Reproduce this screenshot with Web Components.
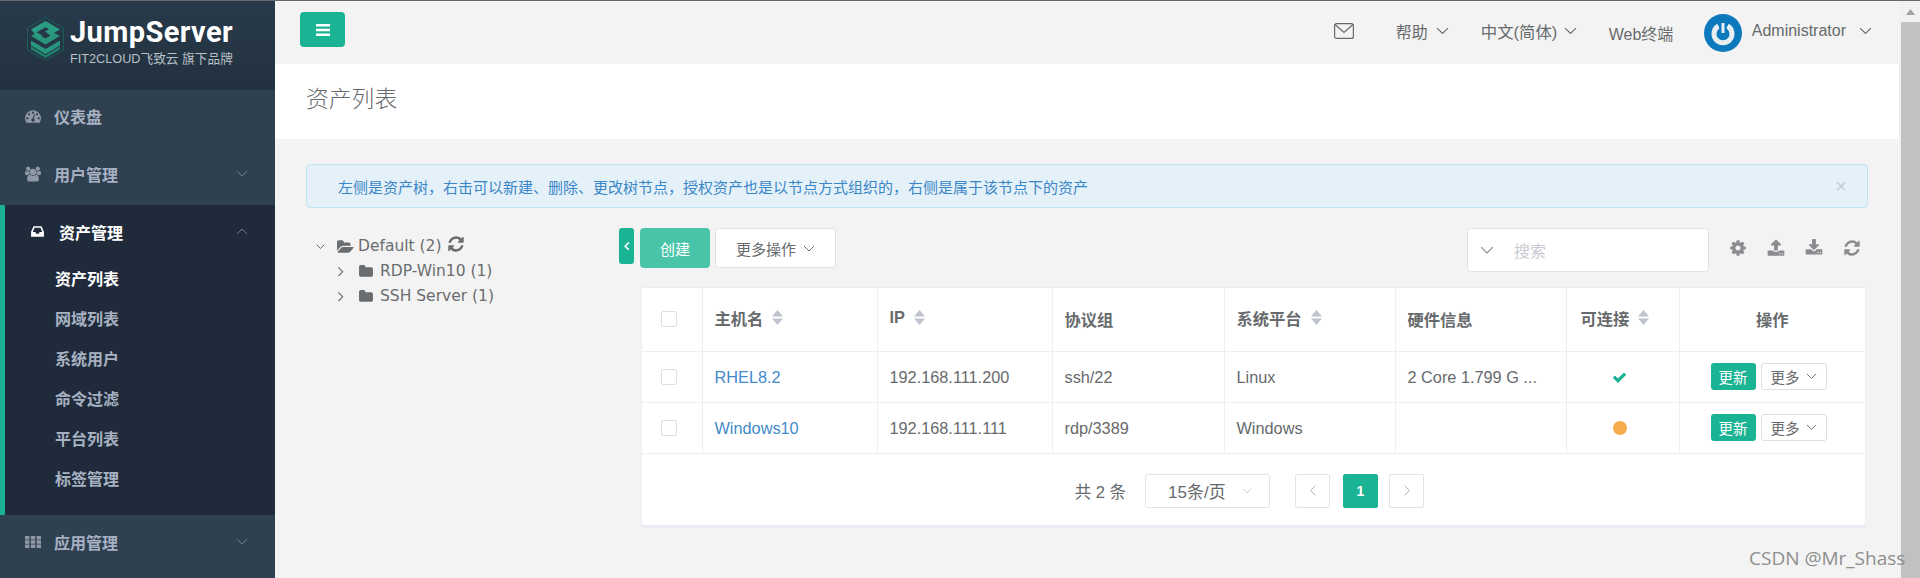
<!DOCTYPE html>
<html lang="zh"><head><meta charset="utf-8"><title>资产列表</title>
<style>
html,body{margin:0;height:578px;overflow:hidden;background:#f3f3f3}
body{font-family:"Liberation Sans","Noto Sans CJK SC",sans-serif;color:#676a6c;font-size:16px}
</style></head><body>
<js-app></js-app>
<script>
const P={
dashboard:['0 0 1792 1792','M384 1152q0-53-37.5-90.5t-90.5-37.5-90.5 37.5-37.5 90.5 37.5 90.5 90.5 37.5 90.5-37.5 37.5-90.5zm192-448q0-53-37.5-90.5t-90.5-37.5-90.5 37.5-37.5 90.5 37.5 90.5 90.5 37.5 90.5-37.5 37.5-90.5zm428 481l101-382q6-26-7.5-48.5t-38.5-29.5-48 6.5-30 39.5l-101 382q-60 5-107 43.5t-63 98.5q-20 77 20 146t117 89 146-20 89-117q16-60-6-117t-72-91zm660-33q0-53-37.5-90.5t-90.5-37.5-90.5 37.5-37.5 90.5 37.5 90.5 90.5 37.5 90.5-37.5 37.5-90.5zm-640-640q0-53-37.5-90.5t-90.5-37.5-90.5 37.5-37.5 90.5 37.5 90.5 90.5 37.5 90.5-37.5 37.5-90.5zm448 192q0-53-37.5-90.5t-90.5-37.5-90.5 37.5-37.5 90.5 37.5 90.5 90.5 37.5 90.5-37.5 37.5-90.5zm320 448q0 261-141 483-19 29-54 29h-1402q-35 0-54-29-141-221-141-483 0-182 71-348t191-286 286-191 348-71 348 71 286 191 191 286 71 348z'],
users:['0 0 1920 1792','M593 896q-162 5-265 128h-134q-82 0-138-40.5t-56-118.5q0-353 124-353 6 0 43.5 21t97.5 42.5 119 21.5q67 0 133-23-5 37-5 66 0 139 81 256zm1071 637q0 120-73 189.5t-194 69.5h-874q-121 0-194-69.5t-73-189.5q0-53 3.5-103.5t14-109 26.5-108.5 43-97.5 62-81 85.5-53.5 111.5-20q10 0 43 21.5t73 48 107 48 135 21.5 135-21.5 107-48 73-48 43-21.5q61 0 111.5 20t85.5 53.5 62 81 43 97.5 26.5 108.5 14 109 3.5 103.5zm-1024-1277q0 106-75 181t-181 75-181-75-75-181 75-181 181-75 181 75 75 181zm704 384q0 159-112.5 271.5t-271.5 112.5-271.5-112.5-112.5-271.5 112.5-271.5 271.5-112.5 271.5 112.5 112.5 271.5zm576 225q0 78-56 118.5t-138 40.5h-134q-103-123-265-128 81-117 81-256 0-29-5-66 66 23 133 23 59 0 119-21.5t97.5-42.5 43.5-21q124 0 124 353zm-128-609q0 106-75 181t-181 75-181-75-75-181 75-181 181-75 181 75 75 181z'],
inbox:['0 0 1792 1792','M1151 960h316q-1-3-2.5-8.5t-2.5-7.5l-212-496h-708l-212 496q-1 3-2.5 8.5t-2.5 7.5h316l95 192h320zm513 30v482q0 26-19 45t-45 19h-1408q-26 0-45-19t-19-45v-482q0-62 25-123l238-552q10-25 36.5-42t52.5-17h832q26 0 52.5 17t36.5 42l238 552q25 61 25 123z'],
th:['0 0 16 12','M0 0h4.4v3.4H0zM5.8 0h4.4v3.4H5.800zM11.600 0H16v3.400h-4.400zM0 4.300h4.400v3.400H0zM5.800 4.300h4.400v3.400H5.800zM11.600 4.300H16v3.400h-4.400zM0 8.600h4.400V12H0zM5.800 8.600h4.400V12H5.800zM11.600 8.600H16V12h-4.400z'],
refresh:['0 0 1792 1792','M1639 1056q0 5-1 7-64 268-268 434.5t-478 166.5q-146 0-282.5-55t-243.5-157l-129 129q-19 19-45 19t-45-19-19-45v-448q0-26 19-45t45-19h448q26 0 45 19t19 45-19 45l-137 137q71 66 161 102t187 36q134 0 250-65t186-179q11-17 53-117 8-23 30-23h192q13 0 22.5 9.5t9.5 22.5zm25-800v448q0 26-19 45t-45 19h-448q-26 0-45-19t-19-45 19-45l138-138q-148-137-349-137-134 0-250 65t-186 179q-11 17-53 117-8 23-30 23h-199q-13 0-22.5-9.5t-9.5-22.5v-7q65-268 270-434.5t480-166.5q146 0 284 55.5t245 156.5l130-129q19-19 45-19t45 19 19 45z'],
cog:['0 0 1792 1792','M1152 896q0-106-75-181t-181-75-181 75-75 181 75 181 181 75 181-75 75-181zm512-109v222q0 12-8 23t-20 13l-185 28q-19 54-39 91 35 50 107 138 10 12 10 25t-9 23q-27 37-99 108t-94 71q-12 0-26-9l-138-108q-44 23-91 38-16 136-29 186-7 28-36 28h-222q-14 0-24.5-8.5t-11.5-21.5l-28-184q-49-16-90-37l-141 107q-10 9-25 9-14 0-25-11-126-114-165-168-7-10-7-23 0-12 8-23 15-21 51-66.5t54-70.5q-27-50-41-99l-183-27q-13-2-21-12.5t-8-23.5v-222q0-12 8-23t19-13l186-28q14-46 39-92-40-57-107-138-10-12-10-24 0-10 9-23 26-36 98.5-107.5t94.5-71.5q13 0 26 10l138 107q44-23 91-38 16-136 29-186 7-28 36-28h222q14 0 24.5 8.5t11.5 21.5l28 184q49 16 90 37l142-107q9-9 24-9 13 0 25 10 129 119 165 170 7 8 7 22 0 12-8 23-15 21-51 66.5t-54 70.5q26 50 41 98l183 28q13 2 21 12.5t8 23.5z'],
upload:['0 0 1792 1792','M1344 1472q0-26-19-45t-45-19-45 19-19 45 19 45 45 19 45-19 19-45zm256 0q0-26-19-45t-45-19-45 19-19 45 19 45 45 19 45-19 19-45zm128-224v320q0 40-28 68t-68 28h-1472q-40 0-68-28t-28-68v-320q0-40 28-68t68-28h427q21 56 70.5 92t110.5 36h256q61 0 110.5-36t70.5-92h427q40 0 68 28t28 68zm-325-648q-17 40-59 40h-256v448q0 26-19 45t-45 19h-256q-26 0-45-19t-19-45v-448h-256q-42 0-59-40-17-39 14-69l448-448q18-19 45-19t45 19l448 448q31 30 14 69z'],
download:['0 0 1792 1792','M1344 1344q0-26-19-45t-45-19-45 19-19 45 19 45 45 19 45-19 19-45zm256 0q0-26-19-45t-45-19-45 19-19 45 19 45 45 19 45-19 19-45zm128-224v320q0 40-28 68t-68 28h-1472q-40 0-68-28t-28-68v-320q0-40 28-68t68-28h465l135 136q58 56 136 56t136-56l136-136h464q40 0 68 28t28 68zm-325-569q17 41-14 70l-448 448q-18 19-45 19t-45-19l-448-448q-31-29-14-70 17-39 59-39h256v-448q0-26 19-45t45-19h256q26 0 45 19t19 45v448h256q42 0 59 39z'],
check:['0 0 1792 1792','M1671 566q0 40-28 68l-724 724-136 136q-28 28-68 28t-68-28l-136-136-362-362q-28-28-28-68t28-68l136-136q28-28 68-28t68 28l294 295 656-657q28-28 68-28t68 28l136 136q28 28 28 68z'],
folder:['0 0 1664 1792','M1664 608v704q0 92-66 158t-158 66h-1216q-92 0-158-66t-66-158v-960q0-92 66-158t158-66h320q92 0 158 66t66 158v32h672q92 0 158 66t66 158z'],
folderopen:['0 0 1920 1792','M1879 952q0 31-31 66l-336 396q-43 51-120.5 86.5t-143.5 35.5h-1088q-34 0-60.5-13t-26.5-43q0-31 31-66l336-396q43-51 120.5-86.5t143.5-35.5h1088q34 0 60.5 13t26.5 43zm-343-344v160h-832q-94 0-197 47.5t-164 119.5l-337 396-5 6q0-4-.5-12.5t-.5-12.5v-960q0-92 66-158t158-66h320q92 0 158 66t66 158v32h544q92 0 158 66t66 158z'],
bars:['0 0 14 12','M0 0h14v2.600H0zM0 4.700h14v2.600H0zM0 9.400h14V12H0z']
};
function def(name,html,init){customElements.define(name,class extends HTMLElement{connectedCallback(){if(this.shadowRoot)return;const r=this.attachShadow({mode:'open'});r.innerHTML=typeof html==='function'?html(this):html;}});}
def('js-icon',h=>{const p=P[h.getAttribute('name')];return `<style>:host{display:inline-flex;width:${h.getAttribute('w')||14}px;height:${h.getAttribute('h')||14}px;color:inherit}svg{width:100%;height:100%;display:block;fill:currentColor}</style><svg viewBox="${p[0]}" preserveAspectRatio="xMidYMid meet"><path d="${p[1]}"/></svg>`});
def('js-chev',h=>{const d=h.getAttribute('dir')||'down',w=+(h.getAttribute('w')||12),c=h.getAttribute('color')||'currentColor',sw=h.getAttribute('sw')||'1';
const path={down:'M1 1l5 5 5-5',up:'M1 6l5-5 5 5',right:'M1.500 0.500l5 5-5 5',left:'M6.500 0.500l-5 5 5 5'}[d];const vb=(d==='left'||d==='right')?'0 0 8 11':'0 0 12 7';
const hh=(d==='left'||d==='right')?w*11/8:w*7/12;
return `<style>:host{display:inline-flex}svg{display:block;fill:none;stroke:${c};stroke-width:${sw}}</style><svg width="${w}" height="${hh}" viewBox="${vb}"><path d="${path}"/></svg>`});
def('js-sort',`<style>:host{display:inline-block;width:11px;height:15px}svg{display:block;fill:#bfc4cf}</style><svg width="11" height="15" viewBox="0 0 11 15"><path d="M5.500 0L11 6.400H0zM0 8.600h11L5.500 15z"/></svg>`);
def('js-nav-item',h=>{const ch=h.getAttribute('chev');return `<style>
:host{display:flex;align-items:center;height:${h.getAttribute('ht')||58}px;box-sizing:border-box;padding:0 27px 5px 25px;color:#a7b1c2;font-weight:700;font-size:16px}
:host([active]){color:#fff;padding-left:25px}
.i{width:16px;display:flex;margin-right:13px}
:host([active]) .i{width:15px;margin-right:14px}
.t{flex:1}
</style><span class="i"><slot name="icon"></slot></span><span class="t"><slot></slot></span>${ch?`<js-chev dir="${ch}" w="12" color="#6f7d8c"></js-chev>`:''}`});
def('js-sub-item',`<style>:host{display:block;height:40px;line-height:33px;padding-left:50px;color:#a7b1c2;font-weight:700;font-size:16px}:host([on]){color:#fff}</style><slot></slot>`);
def('js-logo',`<style>
:host{display:flex;height:89px;box-sizing:border-box;padding:16px 0 0 27px;background:linear-gradient(180deg,#283a4a,#22313f);gap:7px;color:#fff}
.n{font:700 29px/30px Roboto,"Liberation Sans",sans-serif;letter-spacing:.4px;margin-left:-1px}
.s{font:400 12.700px/16px "Liberation Sans","Noto Sans CJK SC",sans-serif;color:#b9c0c7;margin:4px 0 0 -1px;white-space:nowrap}
</style>
<svg width="37" height="44" viewBox="0 0 37 44"><path d="M18.500 .500L36.500 11v22l-18 10.500L.500 33V11z" fill="none" stroke="#1a5e5a" stroke-width="1"/><path d="M18.500 4L33 12.500 24 17.500 18 14.500l4-2.200-3.500-2-9 5 6 3.400-4 2.300L4 12.500z" fill="#2a9d82"/><path d="M4 19l5-3 9.500 5.500 5-3-4-2.400 3.800-2L33 19 18.500 27.500z" fill="#2a9d82" opacity=".9"/><path d="M4 23.500l14.500 8.500L33 23.500v5L18.500 37 4 28.500z" fill="#27977d"/><path d="M4 29.500l14.500 8.500L33 29.500v3L18.500 41 4 32.500z" fill="#20806c"/></svg>
<div><div class="n">JumpServer</div><div class="s">FIT2CLOUD飞致云 旗下品牌</div></div>`);
def('js-sidebar',`<style>
:host{display:block;width:275px;flex:none;background:#2f4050;height:577px;overflow:hidden}
.act{background:#1f2b3a;border-left:5px solid #1ab394;height:310px;box-sizing:border-box}
</style>
<js-logo></js-logo>
<js-nav-item ht="57"><js-icon slot="icon" name="dashboard" w="16" h="16" style="color:#8f99a5"></js-icon>仪表盘</js-nav-item>
<js-nav-item chev="down"><js-icon slot="icon" name="users" w="17" h="16" style="color:#8f99a5"></js-icon>用户管理</js-nav-item>
<div class="act">
<js-nav-item active chev="up"><js-icon slot="icon" name="inbox" w="15" h="15" style="color:#fff"></js-icon>资产管理</js-nav-item>
<js-sub-item on>资产列表</js-sub-item>
<js-sub-item>网域列表</js-sub-item>
<js-sub-item>系统用户</js-sub-item>
<js-sub-item>命令过滤</js-sub-item>
<js-sub-item>平台列表</js-sub-item>
<js-sub-item>标签管理</js-sub-item>
</div>
<js-nav-item chev="down"><js-icon slot="icon" name="th" w="16" h="12" style="color:#8f99a5"></js-icon>应用管理</js-nav-item>`);
def('js-topbar',`<style>
:host{display:flex;align-items:center;height:63px;background:#f3f3f3;padding-left:25px;font-size:16px;color:#676a6c}
.b{width:45px;height:35px;background:#1ab394;border-radius:4px;display:flex;align-items:center;justify-content:center;color:#fff;margin-top:-6px}
.r{margin-left:auto;display:flex;align-items:center;padding-right:27px;height:100%}
.it{display:flex;align-items:center;gap:8px;margin-top:-3px;white-space:nowrap}
.av{width:38px;height:38px;border-radius:50%;background:#0c79bd;display:flex;align-items:center;justify-content:center}
</style>
<div class="b"><js-icon name="bars" w="14" h="12"></js-icon></div>
<div class="r">
<svg width="20" height="16" viewBox="0 0 20 16" style="margin-right:42px;margin-top:-3px"><rect x=".6" y=".6" width="18.800" height="14.800" rx="2" fill="none" stroke="#676a6c" stroke-width="1.200"/><path d="M1 1.500l9 8 9-8" fill="none" stroke="#676a6c" stroke-width="1.200"/></svg>
<div class="it" style="width:85px">帮助<js-chev w="13" color="#676a6c"></js-chev></div>
<div class="it" style="width:128px;gap:7px;font-size:16.400px">中文(简体)<js-chev w="13" color="#676a6c"></js-chev></div>
<div class="it" style="width:95px;margin-top:1px;font-size:16px">Web终端</div>
<div class="av"><svg width="26" height="26" viewBox="0 0 26 26"><path d="M8.500 6A9 9 0 1 0 17.500 6" fill="none" stroke="#e8eef2" stroke-width="5"/><path d="M13 2v12" stroke="#0c79bd" stroke-width="7"/><path d="M13 3v10" stroke="#e8eef2" stroke-width="3"/></svg></div>
<div class="it" style="margin-left:10px;gap:0;font-size:16px;margin-top:-3px">Administrator<js-chev w="13" color="#676a6c" style="margin-left:13px"></js-chev></div>
</div>`);
def('js-title',`<style>:host{display:flex;align-items:center;height:75px;background:#fff;padding-left:31px;font-size:22.800px;color:#676a6c;font-weight:300;box-sizing:border-box;padding-bottom:8px}</style><slot></slot>`);
def('js-alert',`<style>:host{display:flex;align-items:center;height:44px;box-sizing:border-box;background:#e5f1f8;border:1px solid #bde5f1;border-radius:4px;padding:0 20px 0 31px;margin-right:1px;color:#3a87c8;font-size:15px}span{flex:1}i{font:400 20px/1 "Liberation Sans",sans-serif;color:#c3ced6}</style><span><slot></slot></span><i>×</i>`);
def('js-tree',`<style>
:host{display:block;width:313px;flex:none;padding-top:6px;font:400 15.500px/25px "DejaVu Sans","Noto Sans CJK SC",sans-serif;color:#6a6d70}
.r{display:flex;align-items:center;height:25px;white-space:nowrap}
.c{display:inline-flex;width:10px;justify-content:center;margin-right:10px}
.l{padding-left:9px}.l2{padding-left:29px}
</style>
<div class="r l"><span class="c"><js-chev w="9" sw="1.300" color="#676a6c"></js-chev></span><js-icon name="folderopen" w="17" h="16" style="margin:0 4px 0 2px"></js-icon>Default (2)<js-icon name="refresh" w="18" h="18" style="margin:-6px 0 0 5px"></js-icon></div>
<div class="r l2"><span class="c"><js-chev dir="right" w="7" sw="1.300" color="#676a6c"></js-chev></span><js-icon name="folder" w="14" h="15" style="margin:0 7px 0 4px"></js-icon>RDP-Win10 (1)</div>
<div class="r l2"><span class="c"><js-chev dir="right" w="7" sw="1.300" color="#676a6c"></js-chev></span><js-icon name="folder" w="14" h="15" style="margin:0 7px 0 4px"></js-icon>SSH Server (1)</div>`);
def('js-toolbar',`<style>
:host{display:flex;align-items:flex-start;height:44px;font-size:15px;color:#676a6c}
.t{width:15px;height:36px;background:#1ab394;border-radius:3px;display:flex;align-items:center;justify-content:center;margin-right:6px}
.c{width:70px;height:40px;background:#49c4a9;border-radius:4px;color:#fff;display:flex;align-items:center;justify-content:center;margin-right:5px}
.m{width:121px;height:40px;box-sizing:border-box;background:#fff;border:1px solid #dfe1e6;border-radius:4px;display:flex;align-items:center;justify-content:center;gap:7px}
.s{margin-left:auto;width:242px;height:44px;box-sizing:border-box;background:#fff;border:1px solid #dfe1e6;border-radius:4px;display:flex;align-items:center;padding-left:12px;font-size:16px;color:#c8cbd1}
.s span{margin-left:20px}
.ic{display:flex;gap:20px;margin:11px 8px 0 20px;color:#8a8c8f}
</style>
<div class="t"><js-chev dir="left" w="6" sw="2" color="#fff"></js-chev></div>
<div class="c">创建</div>
<div class="m">更多操作<js-chev w="12" color="#676a6c"></js-chev></div>
<div class="s"><js-chev w="14" color="#8a8c8f"></js-chev><span>搜索</span></div>
<div class="ic"><js-icon name="cog" w="18" h="18"></js-icon><js-icon name="upload" w="18" h="18"></js-icon><js-icon name="download" w="18" h="18"></js-icon><js-icon name="refresh" w="18" h="18"></js-icon></div>`);
def('js-check',`<style>:host{display:block;width:16px;height:16px;box-sizing:border-box;background:#fff;border:1px solid #dcdfe6;border-radius:2px}</style>`);
def('js-row-actions',`<style>
:host{display:flex;gap:5px;font-size:14.500px;margin-left:19px}
.u{width:45px;height:27px;background:#1ab394;border-radius:3px;color:#fff;display:flex;align-items:center;justify-content:center}
.m{width:66px;height:27px;box-sizing:border-box;background:#fff;border:1px solid #dcdfe6;border-radius:3px;display:flex;align-items:center;justify-content:center;gap:6px}
</style><div class="u">更新</div><div class="m">更多<js-chev w="11" color="#676a6c"></js-chev></div>`);
def('js-table',`<style>
:host{display:block;background:#fff;border:solid #e9ecf1;border-width:0 0 2px 0;box-shadow:0 0 0 1px #eaedf2;height:237px;font-size:16.300px;color:#676a6c}
table{border-collapse:collapse;table-layout:fixed;width:1223px}
th,td{border:1px solid #eceef2;padding:0 12px;text-align:left;white-space:nowrap;overflow:hidden;box-sizing:border-box}
tr>:first-child{border-left:0}tr>:last-child{border-right:0}
tr:first-child th{border-top:0}
th{height:63px;font-weight:700;font-size:16.300px}
td{height:51px;padding-top:2px}
td.ck,td:last-child{padding-top:0}
th.sort{padding-bottom:3px}
th span{display:inline-flex;align-items:center;gap:9px}
a{color:#428bca;text-decoration:none}
.ck{padding:0 0 0 19px}
td.ctr{text-align:center;padding:0 18px 0 12px}
th.ctr{text-align:center}
th.conn{padding-left:14px}
.dot{display:block;width:14px;height:14px;border-radius:50%;background:#f7ac4f;margin:auto}
.pg{display:flex;align-items:center;justify-content:flex-end;height:70px;padding:2px 441px 0 0;font-size:16.500px}
.sel{width:125px;height:34px;box-sizing:border-box;border:1px solid #e2e4e9;border-radius:3px;display:flex;align-items:center;margin-left:19px;padding-left:22px;gap:16px;font-size:17px}
.p{width:35px;height:34px;box-sizing:border-box;border:1px solid #e2e4e9;border-radius:2px;display:flex;align-items:center;justify-content:center}
.cur{background:#1ab394;color:#fff;border-color:#1ab394;font-weight:700;font-size:14px;margin:0 11px 0 13px}
</style>
<table><colgroup><col style="width:60px"><col style="width:175px"><col style="width:175px"><col style="width:172px"><col style="width:171px"><col style="width:171px"><col style="width:113px"><col style="width:186px"></colgroup>
<tr><th class="ck"><js-check></js-check></th><th class="sort"><span>主机名<js-sort></js-sort></span></th><th class="sort"><span>IP<js-sort></js-sort></span></th><th>协议组</th><th class="sort"><span>系统平台<js-sort></js-sort></span></th><th>硬件信息</th><th class="sort conn"><span>可连接<js-sort></js-sort></span></th><th class="ctr">操作</th></tr>
<tr><td class="ck"><js-check></js-check></td><td><a>RHEL8.2</a></td><td>192.168.111.200</td><td>ssh/22</td><td>Linux</td><td>2 Core 1.799 G ...</td><td class="ctr"><js-icon name="check" w="15" h="15" style="color:#1ab394;vertical-align:middle"></js-icon></td><td><js-row-actions></js-row-actions></td></tr>
<tr><td class="ck"><js-check></js-check></td><td><a>Windows10</a></td><td>192.168.111.111</td><td>rdp/3389</td><td>Windows</td><td></td><td class="ctr"><i class="dot"></i></td><td><js-row-actions></js-row-actions></td></tr>
</table>
<div class="pg">共 2 条<div class="sel">15条/页<js-chev w="10" color="#c0c4cc"></js-chev></div><div class="p" style="margin-left:25px"><js-chev dir="left" w="8" color="#aab0bc"></js-chev></div><div class="p cur">1</div><div class="p"><js-chev dir="right" w="8" color="#aab0bc"></js-chev></div></div>`);
def('js-scrollbar',`<style>:host{display:flex;flex-direction:column;width:21px;flex:none;background:#f1f1f1;height:577px;align-items:flex-end}.a{width:19px;height:21px;display:flex;align-items:center;justify-content:center}.t{width:19px;flex:1;background:#c1c1c1}</style><div class="a"><svg width="9" height="6" viewBox="0 0 9 6"><path d="M4.500 0L9 6H0z" fill="#a3a3a3"/></svg></div><div class="t"></div>`);
def('js-app',`<style>
:host{display:flex;flex-direction:column;height:578px;position:relative;overflow:hidden;background:#f3f3f3}
.top{height:1px;background:#676a6c}
.body{display:flex;height:577px}
main{flex:1;min-width:0;height:577px;overflow:hidden}
.wrap{padding:25px 30px 0 31px}
.cols{display:flex;margin-top:20px}
.right{flex:1;min-width:0}
.tb{display:block;margin:16px 4px 0 23px}
.wm{position:absolute;left:1749px;top:545px;font:400 19px/26px "Open Sans",sans-serif;color:#8e8e8e;white-space:nowrap}
</style>
<div class="top"></div>
<div class="body">
<js-sidebar></js-sidebar>
<main>
<js-topbar></js-topbar>
<js-title>资产列表</js-title>
<div class="wrap">
<js-alert>左侧是资产树，右击可以新建、删除、更改树节点，授权资产也是以节点方式组织的，右侧是属于该节点下的资产</js-alert>
<div class="cols">
<js-tree></js-tree>
<div class="right"><js-toolbar></js-toolbar><js-table class="tb"></js-table></div>
</div>
</div>
</main>
<js-scrollbar></js-scrollbar>
</div>
<div class="wm">CSDN @Mr_Shass</div>`);
</script>
</body></html>
